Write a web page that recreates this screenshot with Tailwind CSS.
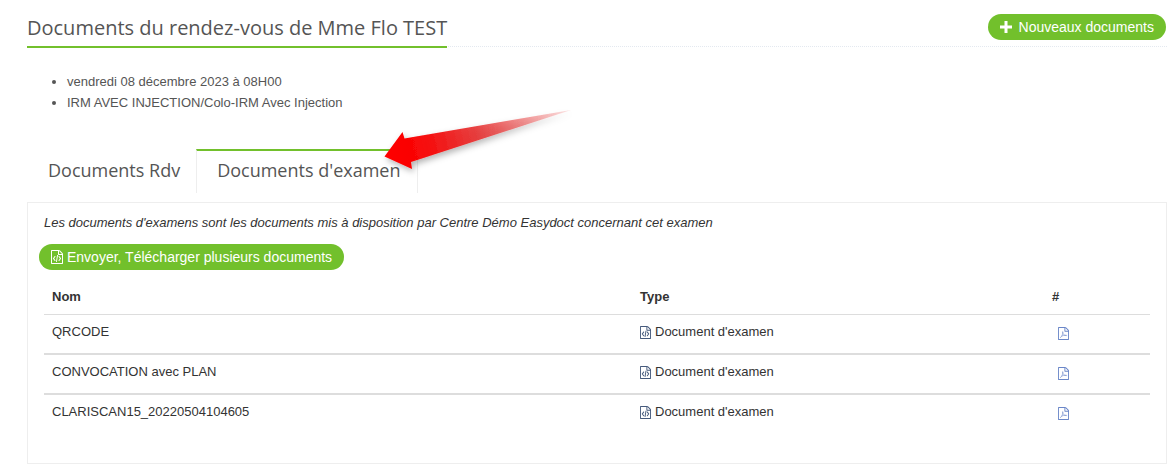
<!DOCTYPE html>
<html lang="fr">
<head>
  <meta charset="UTF-8">
  <meta name="viewport" content="width=device-width, initial-scale=1">
  <title>Documents du rendez-vous</title>
  <script src="https://cdn.jsdelivr.net/npm/@tailwindcss/browser@4"></script>
</head>
<body class="bg-white pl-[27px] pr-[6px] pt-3 pb-1 font-['Liberation_Sans',Arial,sans-serif] text-[13px] leading-[18px] text-[#333]">

  <svg class="hidden">
    <symbol id="icon-code" viewBox="0 0 1536 1792">
      <path d="M1468 380q28 28 48 76t20 88v1152q0 40-28 68t-68 28h-1344q-40 0-68-28t-28-68v-1600q0-40 28-68t68-28h896q40 0 88 20t76 48zm-444-244v376h376q-10-29-22-41l-313-313q-12-12-41-22zm384 1528v-1024h-416q-40 0-68-28t-28-68v-416h-768v1536h1280z"/>
      <path transform="translate(-128)" d="M608 768q8-11 21-12.5t24 6.5l51 38q11 8 12.5 21t-6.5 24l-182 243 182 243q8 11 6.5 24t-12.5 21l-51 38q-11 8-24 6.5t-21-12.5l-226-301q-14-19 0-38zm802 301q14 19 0 38l-226 301q-8 11-21 12.5t-24-6.5l-51-38q-11-8-12.5-21t6.5-24l182-243-182-243q-8-11-6.5-24t12.5-21l51-38q11-8 24-6.5t21 12.5zm-620 461q-13-2-20.5-13t-5.5-24l138-831q2-13 13-20.5t24-5.5l63 10q13 2 20.5 13t5.5 24l-138 831q-2 13-13 20.5t-24 5.5z"/>
    </symbol>
    <symbol id="icon-pdf" viewBox="0 0 1536 1792">
      <path d="M1468 380q28 28 48 76t20 88v1152q0 40-28 68t-68 28h-1344q-40 0-68-28t-28-68v-1600q0-40 28-68t68-28h896q40 0 88 20t76 48zm-444-244v376h376q-10-29-22-41l-313-313q-12-12-41-22zm384 1528v-1024h-416q-40 0-68-28t-28-68v-416h-768v1536h1280z"/>
      <path d="M290 1500c180-70 390-480 400-800 5-100-60-90-55 0 20 250 200 470 530 490 100 0 70-60-30-55-260 5-460 60-660 130" fill="none" stroke="currentColor" stroke-width="80"/>
    </symbol>
  </svg>

  <header class="flex h-[35px] items-start justify-between border-b border-dotted border-[#e4e9f0]">
    <h1 class="h-9 border-b-2 border-[#72c02c] font-['Open_Sans',sans-serif] text-[20px] leading-[32px] font-normal text-[#555]">Documents du rendez-vous de Mme Flo TEST</h1>
    <button type="button" class="mt-[2px] mr-px flex h-[26px] items-center gap-[7px] rounded-full bg-[#72c02c] px-3 text-[14px] text-white">
      <svg class="size-3" viewBox="0 0 12 12" fill="currentColor"><path d="M4.500 0h3v4.500h4.500v3h-4.500v4.500h-3v-4.500h-4.500v-3h4.500z"/></svg>
      Nouveaux documents
    </button>
  </header>

  <ul class="mt-6 list-disc pl-10 leading-[21px] text-[#555]">
    <li>vendredi 08 décembre 2023 à 08H00</li>
    <li>IRM AVEC INJECTION/Colo-IRM Avec Injection</li>
  </ul>

  <main class="relative mt-9">
    <nav class="flex font-['Open_Sans',sans-serif] text-[18px] leading-[38px] font-normal">
      <a href="#rdv" class="border-t-2 border-transparent pr-4 pb-1 pl-[21px] text-[#555]">Documents Rdv</a>
      <a href="#examen" class="border-x border-t-2 border-x-[#eee] border-t-[#72c02c] pr-4 pb-1 pl-5 text-[#555]">Documents d'examen</a>
    </nav>

    <!-- flèche qui pointe vers l'onglet actif -->
    <svg class="pointer-events-none absolute -top-14 left-[343px] h-[85px] w-[220px]" viewBox="370 93 220 85">
      <defs>
        <linearGradient id="arrow" gradientUnits="userSpaceOnUse" x1="385" y1="156" x2="570" y2="110">
          <stop offset="0" stop-color="#ff0000"/>
          <stop offset=".2" stop-color="#f80808"/>
          <stop offset=".5" stop-color="#e63030" stop-opacity=".9"/>
          <stop offset="1" stop-color="#e84040" stop-opacity=".15"/>
        </linearGradient>
        <filter id="shadow" x="-10%" y="-20%" width="120%" height="150%">
          <feDropShadow dx="2" dy="3" stdDeviation="3" flood-color="#000" flood-opacity=".3"/>
        </filter>
      </defs>
      <path d="M384.500 156.500L402.500 132L404.500 138.500L571 110L411 162L412 169Z" fill="url(#arrow)" filter="url(#shadow)"/>
    </svg>

    <section class="mt-[9px] border border-[#eee] px-4 pt-[11px] pb-9">
      <p class="italic">Les documents d'examens sont les documents mis à disposition par Centre Démo Easydoct concernant cet examen</p>
      <button type="button" class="mt-3 -ml-[5px] flex h-[26px] items-center gap-1 rounded-full bg-[#72c02c] px-3 text-[14px] text-white">
        <svg class="h-[14px] w-3" fill="currentColor"><use href="#icon-code"/></svg>
        Envoyer, Télécharger plusieurs documents
      </button>

      <table class="mt-[10px] w-full table-fixed border-separate border-spacing-0 text-left">
        <colgroup>
          <col>
          <col class="w-[412px]">
          <col class="w-[106px]">
        </colgroup>
        <thead>
          <tr>
            <th class="border-b border-[#ddd] p-2">Nom</th>
            <th class="border-b border-[#ddd] p-2">Type</th>
            <th class="border-b border-[#ddd] p-2">#</th>
          </tr>
        </thead>
        <tbody class="align-top">
          <tr class="h-10">
            <td class="border-b-2 border-[#ddd] px-2 pt-2">QRCODE</td>
            <td class="border-b-2 border-[#ddd] px-2 pt-2">
              <span class="flex items-center gap-1"><svg class="h-[13px] w-[11px]" fill="#455a7c"><use href="#icon-code"/></svg>Document d'examen</span>
            </td>
            <td class="border-b-2 border-[#ddd] pt-3 pl-[14px]">
              <a href="#qrcode" aria-label="PDF" class="block w-[11px] text-[#6a86c8]"><svg class="h-[13px] w-[11px]" fill="currentColor"><use href="#icon-pdf"/></svg></a>
            </td>
          </tr>
          <tr class="h-10">
            <td class="border-b-2 border-[#ddd] px-2 pt-2">CONVOCATION avec PLAN</td>
            <td class="border-b-2 border-[#ddd] px-2 pt-2">
              <span class="flex items-center gap-1"><svg class="h-[13px] w-[11px]" fill="#455a7c"><use href="#icon-code"/></svg>Document d'examen</span>
            </td>
            <td class="border-b-2 border-[#ddd] pt-3 pl-[14px]">
              <a href="#convocation" aria-label="PDF" class="block w-[11px] text-[#6a86c8]"><svg class="h-[13px] w-[11px]" fill="currentColor"><use href="#icon-pdf"/></svg></a>
            </td>
          </tr>
          <tr class="h-8">
            <td class="px-2 pt-2">CLARISCAN15_20220504104605</td>
            <td class="px-2 pt-2">
              <span class="flex items-center gap-1"><svg class="h-[13px] w-[11px]" fill="#455a7c"><use href="#icon-code"/></svg>Document d'examen</span>
            </td>
            <td class="pt-3 pl-[14px]">
              <a href="#clariscan" aria-label="PDF" class="block w-[11px] text-[#6a86c8]"><svg class="h-[13px] w-[11px]" fill="currentColor"><use href="#icon-pdf"/></svg></a>
            </td>
          </tr>
        </tbody>
      </table>
    </section>
  </main>

</body>
</html>
